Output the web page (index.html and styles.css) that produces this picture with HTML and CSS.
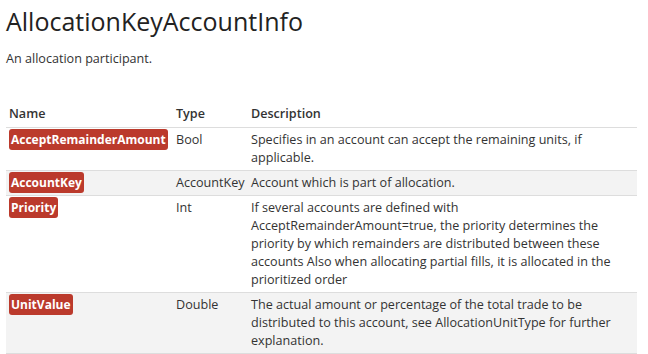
FILE: index.html
```html
<!DOCTYPE html>
<html lang="en">
<head>
  <meta charset="UTF-8" />
  <title>AllocationKeyAccountInfo</title>
  <link rel="stylesheet" href="styles.css">
</head>
<body>

<h1>AllocationKeyAccountInfo</h1>
<p class="summary">An allocation participant.</p>

<table class="props">
  <thead>
    <tr>
      <th class="col-name">Name</th>
      <th class="col-type">Type</th>
      <th>Description</th>
    </tr>
  </thead>
  <tbody>
    <tr>
      <td><span class="prop">AcceptRemainderAmount</span></td>
      <td>Bool</td>
      <td>Specifies in an account can accept the remaining units, if applicable.</td>
    </tr>
    <tr>
      <td><span class="prop">AccountKey</span></td>
      <td>AccountKey</td>
      <td>Account which is part of allocation.</td>
    </tr>
    <tr>
      <td><span class="prop">Priority</span></td>
      <td>Int</td>
      <td>If several accounts are defined with AcceptRemainderAmount=true, the priority determines the priority by which remainders are distributed between these accounts Also when allocating partial fills, it is allocated in the prioritized order</td>
    </tr>
    <tr>
      <td><span class="prop">UnitValue</span></td>
      <td>Double</td>
      <td>The actual amount or percentage of the total trade to be distributed to this account, see AllocationUnitType for further explanation.</td>
    </tr>
  </tbody>
</table>

</body>
</html>
```

FILE: styles.css
```css
body {
  margin: 0;
  padding: 0 6px;
  font-family: 'Open Sans', sans-serif;
  font-size: 12.6px;
  line-height: 18px;
  color: #333;
  background: #fff;
}
h1 {
  margin: 0;
  padding-top: 6px;
  font-size: 25px;
  line-height: 30px;
  font-weight: 400;
  color: #222;
}
.summary {
  margin: 14px 0 0;
}
.props {
  width: 631px;
  margin-top: 34px;
  border-collapse: collapse;
}
.props th {
  text-align: left;
  font-weight: 600;
  padding: 3px 3px 4px;
  border-bottom: 1px solid #ddd;
}
.props td {
  vertical-align: top;
  padding: 3px;
  border-bottom: 1px solid #ddd;
}
.props tbody tr:nth-child(even) td {
  background: #f3f3f3;
}
.col-name {
  width: 161px;
}
.col-type {
  width: 69px;
}
.prop {
  background: #bb3a2c;
  color: #fff;
  font-size: 12px;
  font-weight: 700;
  padding: 2px 2px;
  border-radius: 3px;
}
```
